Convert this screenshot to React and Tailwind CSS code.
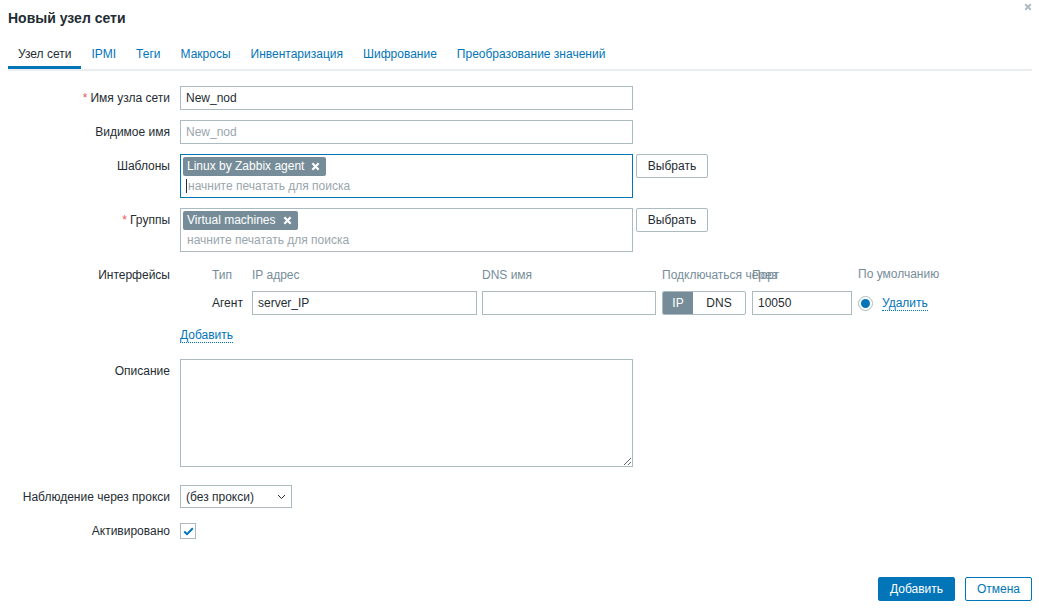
import React from "react";

const Label = ({ children, required }) => (
  <div className="w-[170px] shrink-0 text-right pr-0 leading-[24px]">
    {required && <span className="text-[#e45959] mr-[3px]">*</span>}
    {children}
  </div>
);

const Tag = ({ text }) => (
  <span className="inline-flex items-center h-[19px] bg-[#768d99] text-white rounded-[2px] px-[4px] leading-[19px]">
    {text}
    <svg width="9" height="9" viewBox="0 0 10 10" className="ml-[7px] mr-[2px]">
      <path d="M1.5 1.5 L8.5 8.5 M8.5 1.5 L1.5 8.5" stroke="white" strokeWidth="2.4" />
    </svg>
  </span>
);

const App = () => {
  const tabs = ["Узел сети", "IPMI", "Теги", "Макросы", "Инвентаризация", "Шифрование", "Преобразование значений"];

  return (
    <div
      className="w-[1039px] h-[609px] bg-white text-[#1f2c33] text-[12px] relative overflow-hidden"
      style={{ fontFamily: '"Liberation Sans", Arial, sans-serif' }}
    >
      {/* header */}
      <div className="flex items-center justify-between pl-[8px] pr-[10px] pt-[7px] h-[30px]">
        <h1 className="text-[14px] font-bold text-[#1f2c33]">Новый узел сети</h1>
      </div>
      <button className="absolute right-[4px] top-[0px] w-[14px] h-[14px] flex items-center justify-center">
        <svg width="8" height="8" viewBox="0 0 10 10">
          <path d="M1.5 1.5 L8.5 8.5 M8.5 1.5 L1.5 8.5" stroke="#acbbc2" strokeWidth="2.4" />
        </svg>
      </button>

      {/* tabs */}
      <div className="mx-[8px] mt-[10px] border-b-2 border-[#ebeef0] flex w-[1024px]">
        {tabs.map((t, i) => (
          <div
            key={t}
            className={
              i === 0
                ? "px-[10px] h-[29px] leading-[28px] text-[#1f2c33] border-b-[3px] border-[#0275b8] -mb-[2px]"
                : "px-[10px] h-[29px] leading-[28px] text-[#0275b8]"
            }
          >
            {t}
          </div>
        ))}
      </div>

      {/* form */}
      <div className="flex flex-col mt-[15px]">
        <div className="flex h-[24px]">
          <Label required>Имя узла сети</Label>
          <input
            defaultValue="New_nod"
            className="ml-[10px] w-[453px] h-[24px] border border-[#acbbc2] px-[5px] outline-none text-[12px] text-[#1f2c33]"
          />
        </div>

        <div className="flex h-[24px] mt-[10px]">
          <Label>Видимое имя</Label>
          <input
            placeholder="New_nod"
            className="ml-[10px] w-[453px] h-[24px] border border-[#acbbc2] px-[5px] outline-none text-[12px] placeholder:text-[#9aa6ad]"
          />
        </div>

        <div className="flex mt-[10px]">
          <Label>Шаблоны</Label>
          <div className="ml-[10px] w-[453px] h-[44px] border border-[#0275b8] px-[2px] pt-[2px]">
            <Tag text="Linux by Zabbix agent" />
            <div className="flex items-center h-[20px] pl-[3px]">
              <span className="w-[1px] h-[14px] bg-[#1f2c33]"></span>
              <span className="text-[#9aa6ad] ml-[1px]">начните печатать для поиска</span>
            </div>
          </div>
          <button className="ml-[3px] w-[72px] h-[24px] border border-[#acbbc2] rounded-[2px] bg-white text-[#1f2c33]">
            Выбрать
          </button>
        </div>

        <div className="flex mt-[10px]">
          <Label required>Группы</Label>
          <div className="ml-[10px] w-[453px] h-[44px] border border-[#acbbc2] px-[2px] pt-[2px]">
            <Tag text="Virtual machines" />
            <div className="flex items-center h-[20px] pl-[4px]">
              <span className="text-[#9aa6ad]">начните печатать для поиска</span>
            </div>
          </div>
          <button className="ml-[3px] w-[72px] h-[24px] border border-[#acbbc2] rounded-[2px] bg-white text-[#1f2c33]">
            Выбрать
          </button>
        </div>

        {/* interfaces */}
        <div className="flex mt-[11px]">
          <Label>Интерфейсы</Label>
          <div className="ml-[10px] flex flex-col">
            <div className="flex h-[24px] leading-[24px] text-[#768d99] relative">
              <span className="w-[72px] pl-[32px]">Тип</span>
              <span className="w-[230px]">IP адрес</span>
              <span className="w-[180px]">DNS имя</span>
              <span className="w-[196px]">Подключаться через</span>
              <span className="absolute left-[572px]">Порт</span>
            </div>
            <div className="flex items-center h-[24px] mt-[4px] relative">
              <span className="w-[72px] pl-[32px]">Агент</span>
              <input
                defaultValue="server_IP"
                className="w-[225px] h-[24px] border border-[#acbbc2] px-[5px] outline-none text-[12px]"
              />
              <input className="ml-[5px] w-[174px] h-[24px] border border-[#acbbc2] px-[5px] outline-none" />
              <div className="ml-[6px] flex h-[24px] w-[84px] border border-[#acbbc2] rounded-[2px] overflow-hidden">
                <span className="w-[30px] bg-[#768d99] text-white flex items-center justify-center">IP</span>
                <span className="flex-1 flex items-center justify-center">DNS</span>
              </div>
              <input
                defaultValue="10050"
                className="ml-[6px] w-[100px] h-[24px] border border-[#acbbc2] px-[5px] outline-none text-[12px]"
              />
              <span className="ml-[6px] w-[15px] h-[15px] rounded-full border border-[#acbbc2] flex items-center justify-center">
                <span className="w-[9px] h-[9px] rounded-full bg-[#0275b8]"></span>
              </span>
              <span className="ml-[9px] text-[#0275b8] border-b border-dotted border-[#0275b8] leading-[14px]">Удалить</span>
            </div>
          </div>
          <div className="absolute left-[858px] top-[262px] leading-[24px] text-[#768d99]">По умолчанию</div>
        </div>

        <div className="flex mt-[13px] h-[20px]">
          <div className="w-[170px]"></div>
          <span className="ml-[10px] text-[#0275b8] border-b border-dotted border-[#0275b8] leading-[14px] h-[15px]">
            Добавить
          </span>
        </div>

        <div className="flex mt-[11px]">
          <Label>Описание</Label>
          <textarea className="ml-[10px] w-[453px] h-[108px] border border-[#acbbc2] outline-none resize-y"></textarea>
        </div>

        <div className="flex mt-[18px]">
          <Label>Наблюдение через прокси</Label>
          <div className="ml-[10px] w-[112px] h-[23px] border border-[#acbbc2] flex items-center justify-between px-[5px]">
            <span>(без прокси)</span>
            <svg width="9" height="6" viewBox="0 0 9 6">
              <path d="M1 1 L4.5 4.5 L8 1" stroke="#1f2c33" strokeWidth="1" fill="none" />
            </svg>
          </div>
        </div>

        <div className="flex mt-[10px] items-center">
          <Label>Активировано</Label>
          <span className="ml-[10px] w-[16px] h-[16px] border border-[#acbbc2] flex items-center justify-center">
            <svg width="11" height="9" viewBox="0 0 11 9">
              <path d="M1.2 4.5 L4 7.2 L9.8 1.3" stroke="#0275b8" strokeWidth="2" fill="none" />
            </svg>
          </span>
        </div>
      </div>

      {/* footer */}
      <div className="absolute right-[7px] bottom-[8px] flex gap-[10px]">
        <button className="w-[77px] h-[24px] bg-[#0275b8] text-white rounded-[2px] border border-[#0275b8]">
          Добавить
        </button>
        <button className="w-[67px] h-[24px] bg-white text-[#0275b8] rounded-[2px] border border-[#0275b8]">
          Отмена
        </button>
      </div>
    </div>
  );
};

export default App;
